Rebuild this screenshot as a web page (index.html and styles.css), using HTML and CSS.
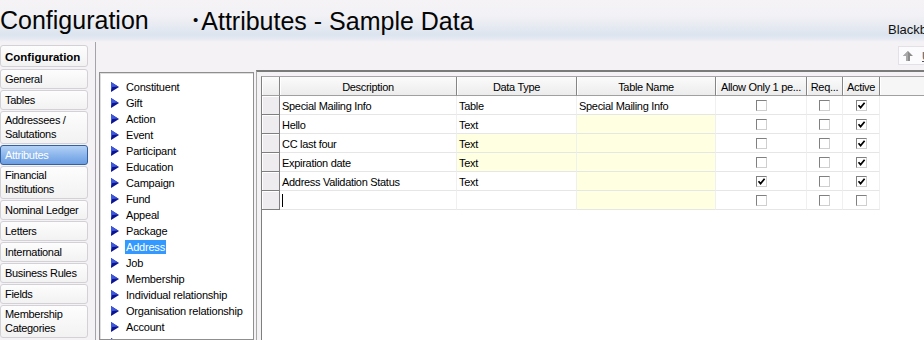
FILE: index.html
```html
<!DOCTYPE html>
<html>
<head>
<meta charset="utf-8">
<link rel="stylesheet" href="styles.css">
</head>
<body>
<header class="topbar">
  <div class="app-title">Configuration</div>
  <div class="page-title"><span class="bullet">•</span>Attributes - Sample Data</div>
  <div class="brand">Blackbaud</div>
</header>
<div class="main">
  <nav class="nav">
    <div class="nav-item nav-head">Configuration</div>
    <div class="nav-item">General</div>
    <div class="nav-item">Tables</div>
    <div class="nav-item two">Addressees /<br>Salutations</div>
    <div class="nav-item active">Attributes</div>
    <div class="nav-item two">Financial<br>Institutions</div>
    <div class="nav-item">Nominal Ledger</div>
    <div class="nav-item">Letters</div>
    <div class="nav-item">International</div>
    <div class="nav-item">Business Rules</div>
    <div class="nav-item">Fields</div>
    <div class="nav-item two">Membership<br>Categories</div>
  </nav>
  <section class="content">
    <div class="toolbar">
      <div class="up-btn">
        <svg width="10" height="10" viewBox="0 0 10 10"><polygon points="5,0 10,5 7,5 7,10 3,10 3,5 0,5" fill="#8c8c8c"/><polygon points="5,0 5,10 3,10 3,5 0,5" fill="#a8a8a8"/></svg>
        <u>Up</u>
      </div>
    </div>
    <div class="panes">
      <div class="tree">
        <div class="tree-item"><svg class="ti" width="8" height="10" viewBox="0 0 8 10"><polygon points="0,0 8,5 0,10" fill="#0c1490"/><polygon points="0,0 7,4.4 1.2,5 0,9" fill="#3d58de"/></svg><span>Constituent</span></div>
        <div class="tree-item"><svg class="ti" width="8" height="10" viewBox="0 0 8 10"><polygon points="0,0 8,5 0,10" fill="#0c1490"/><polygon points="0,0 7,4.4 1.2,5 0,9" fill="#3d58de"/></svg><span>Gift</span></div>
        <div class="tree-item"><svg class="ti" width="8" height="10" viewBox="0 0 8 10"><polygon points="0,0 8,5 0,10" fill="#0c1490"/><polygon points="0,0 7,4.4 1.2,5 0,9" fill="#3d58de"/></svg><span>Action</span></div>
        <div class="tree-item"><svg class="ti" width="8" height="10" viewBox="0 0 8 10"><polygon points="0,0 8,5 0,10" fill="#0c1490"/><polygon points="0,0 7,4.4 1.2,5 0,9" fill="#3d58de"/></svg><span>Event</span></div>
        <div class="tree-item"><svg class="ti" width="8" height="10" viewBox="0 0 8 10"><polygon points="0,0 8,5 0,10" fill="#0c1490"/><polygon points="0,0 7,4.4 1.2,5 0,9" fill="#3d58de"/></svg><span>Participant</span></div>
        <div class="tree-item"><svg class="ti" width="8" height="10" viewBox="0 0 8 10"><polygon points="0,0 8,5 0,10" fill="#0c1490"/><polygon points="0,0 7,4.4 1.2,5 0,9" fill="#3d58de"/></svg><span>Education</span></div>
        <div class="tree-item"><svg class="ti" width="8" height="10" viewBox="0 0 8 10"><polygon points="0,0 8,5 0,10" fill="#0c1490"/><polygon points="0,0 7,4.4 1.2,5 0,9" fill="#3d58de"/></svg><span>Campaign</span></div>
        <div class="tree-item"><svg class="ti" width="8" height="10" viewBox="0 0 8 10"><polygon points="0,0 8,5 0,10" fill="#0c1490"/><polygon points="0,0 7,4.4 1.2,5 0,9" fill="#3d58de"/></svg><span>Fund</span></div>
        <div class="tree-item"><svg class="ti" width="8" height="10" viewBox="0 0 8 10"><polygon points="0,0 8,5 0,10" fill="#0c1490"/><polygon points="0,0 7,4.4 1.2,5 0,9" fill="#3d58de"/></svg><span>Appeal</span></div>
        <div class="tree-item"><svg class="ti" width="8" height="10" viewBox="0 0 8 10"><polygon points="0,0 8,5 0,10" fill="#0c1490"/><polygon points="0,0 7,4.4 1.2,5 0,9" fill="#3d58de"/></svg><span>Package</span></div>
        <div class="tree-item"><svg class="ti" width="8" height="10" viewBox="0 0 8 10"><polygon points="0,0 8,5 0,10" fill="#0c1490"/><polygon points="0,0 7,4.4 1.2,5 0,9" fill="#3d58de"/></svg><span class="sel">Address</span></div>
        <div class="tree-item"><svg class="ti" width="8" height="10" viewBox="0 0 8 10"><polygon points="0,0 8,5 0,10" fill="#0c1490"/><polygon points="0,0 7,4.4 1.2,5 0,9" fill="#3d58de"/></svg><span>Job</span></div>
        <div class="tree-item"><svg class="ti" width="8" height="10" viewBox="0 0 8 10"><polygon points="0,0 8,5 0,10" fill="#0c1490"/><polygon points="0,0 7,4.4 1.2,5 0,9" fill="#3d58de"/></svg><span>Membership</span></div>
        <div class="tree-item"><svg class="ti" width="8" height="10" viewBox="0 0 8 10"><polygon points="0,0 8,5 0,10" fill="#0c1490"/><polygon points="0,0 7,4.4 1.2,5 0,9" fill="#3d58de"/></svg><span>Individual relationship</span></div>
        <div class="tree-item"><svg class="ti" width="8" height="10" viewBox="0 0 8 10"><polygon points="0,0 8,5 0,10" fill="#0c1490"/><polygon points="0,0 7,4.4 1.2,5 0,9" fill="#3d58de"/></svg><span>Organisation relationship</span></div>
        <div class="tree-item"><svg class="ti" width="8" height="10" viewBox="0 0 8 10"><polygon points="0,0 8,5 0,10" fill="#0c1490"/><polygon points="0,0 7,4.4 1.2,5 0,9" fill="#3d58de"/></svg><span>Account</span></div>
        <div class="tree-item"><svg class="ti" width="8" height="10" viewBox="0 0 8 10"><polygon points="0,0 8,5 0,10" fill="#0c1490"/><polygon points="0,0 7,4.4 1.2,5 0,9" fill="#3d58de"/></svg><span>Proposal</span></div>
      </div>
      <div class="grid-pane">
        <div class="grid">
          <div class="grid-row">
            <div class="hcell"></div>
            <div class="hcell">Description</div>
            <div class="hcell">Data Type</div>
            <div class="hcell">Table Name</div>
            <div class="hcell">Allow Only 1 pe...</div>
            <div class="hcell">Req...</div>
            <div class="hcell">Active</div>
            <div class="hcell filler"></div>
          </div>
          <div class="grid-row">
            <div class="rh"></div>
            <div class="cell">Special Mailing Info</div>
            <div class="cell">Table</div>
            <div class="cell">Special Mailing Info</div>
            <div class="cell chk"><span class="cb"></span></div>
            <div class="cell chk"><span class="cb"></span></div>
            <div class="cell chk"><span class="cb"><svg width="9" height="9" viewBox="0 0 9 9"><path d="M1.5 4.2 L3.6 6.6 L7.6 1.8" stroke="#000" stroke-width="1.7" fill="none"/></svg></span></div>
            <div class="cell filler"></div>
          </div>
          <div class="grid-row">
            <div class="rh"></div>
            <div class="cell">Hello</div>
            <div class="cell">Text</div>
            <div class="cell y"></div>
            <div class="cell chk"><span class="cb"></span></div>
            <div class="cell chk"><span class="cb"></span></div>
            <div class="cell chk"><span class="cb"><svg width="9" height="9" viewBox="0 0 9 9"><path d="M1.5 4.2 L3.6 6.6 L7.6 1.8" stroke="#000" stroke-width="1.7" fill="none"/></svg></span></div>
            <div class="cell filler"></div>
          </div>
          <div class="grid-row">
            <div class="rh"></div>
            <div class="cell">CC last four</div>
            <div class="cell y">Text</div>
            <div class="cell y"></div>
            <div class="cell chk"><span class="cb"></span></div>
            <div class="cell chk"><span class="cb"></span></div>
            <div class="cell chk"><span class="cb"><svg width="9" height="9" viewBox="0 0 9 9"><path d="M1.5 4.2 L3.6 6.6 L7.6 1.8" stroke="#000" stroke-width="1.7" fill="none"/></svg></span></div>
            <div class="cell filler"></div>
          </div>
          <div class="grid-row">
            <div class="rh"></div>
            <div class="cell">Expiration date</div>
            <div class="cell y">Text</div>
            <div class="cell y"></div>
            <div class="cell chk"><span class="cb"></span></div>
            <div class="cell chk"><span class="cb"></span></div>
            <div class="cell chk"><span class="cb"><svg width="9" height="9" viewBox="0 0 9 9"><path d="M1.5 4.2 L3.6 6.6 L7.6 1.8" stroke="#000" stroke-width="1.7" fill="none"/></svg></span></div>
            <div class="cell filler"></div>
          </div>
          <div class="grid-row">
            <div class="rh"></div>
            <div class="cell">Address Validation Status</div>
            <div class="cell">Text</div>
            <div class="cell y"></div>
            <div class="cell chk"><span class="cb"><svg width="9" height="9" viewBox="0 0 9 9"><path d="M1.5 4.2 L3.6 6.6 L7.6 1.8" stroke="#000" stroke-width="1.7" fill="none"/></svg></span></div>
            <div class="cell chk"><span class="cb"></span></div>
            <div class="cell chk"><span class="cb"><svg width="9" height="9" viewBox="0 0 9 9"><path d="M1.5 4.2 L3.6 6.6 L7.6 1.8" stroke="#000" stroke-width="1.7" fill="none"/></svg></span></div>
            <div class="cell filler"></div>
          </div>
          <div class="grid-row">
            <div class="rh"></div>
            <div class="cell"><span class="caret"></span></div>
            <div class="cell"></div>
            <div class="cell y"></div>
            <div class="cell chk"><span class="cb"></span></div>
            <div class="cell chk"><span class="cb"></span></div>
            <div class="cell chk"><span class="cb"></span></div>
            <div class="cell filler"></div>
          </div>
        </div>
      </div>
    </div>
  </section>
</div>
</body>
</html>
```

FILE: styles.css
```css
* { box-sizing: border-box; }
html, body { margin: 0; padding: 0; }
body {
  width: 924px;
  height: 340px;
  overflow: hidden;
  background: #f4f2f5;
  font-family: "Liberation Sans", Arial, sans-serif;
  font-size: 11px;
  color: #000;
}

.topbar {
  display: grid;
  grid-template-columns: 193px 695px 1fr;
  height: 42px;
  background: linear-gradient(to bottom, #f5f3f6 0px, #f2f1f5 16px, #e4e9f1 28px, #dce4ef 35px, #e6eaf2 39px, #f4f2f5 42px);
  overflow: hidden;
}
.app-title, .page-title {
  font-size: 25px;
  line-height: 28px;
  padding-top: 6px;
  white-space: nowrap;
  color: #050505;
}
.bullet {
  font-size: 15px;
  vertical-align: 5px;
  margin-right: 3px;
}
.brand {
  font-size: 13px;
  line-height: 14px;
  padding-top: 23px;
  white-space: nowrap;
  overflow: hidden;
  color: #111;
}

.main {
  display: flex;
  height: 298px;
}
.nav {
  flex: none;
  width: 95px;
  padding-top: 3px;
}
.nav-item {
  width: 88px;
  margin-bottom: 1px;
  border: 1px solid #d3d1d6;
  border-radius: 3px;
  background: linear-gradient(to bottom, #fdfdfd, #f2f2f3);
  padding: 2px 4px;
  line-height: 14px;
  letter-spacing: -0.3px;
  white-space: nowrap;
  color: #000;
}
.nav-head {
  font-weight: bold;
  height: 22px;
  line-height: 18px;
  margin-bottom: 2px;
  letter-spacing: 0;
  font-size: 11.5px;
}
.nav-item.two {
  padding: 1px 4px 2px;
}
.nav-item.active {
  background: linear-gradient(to bottom, #b4d2f6, #8cb6ec 50%, #6c9ee2);
  border-color: #33609e;
  color: #fff;
}

.content {
  flex: 1;
  min-width: 0;
  display: flex;
  flex-direction: column;
  border-left: 1px solid #a5a3a8;
}
.toolbar {
  flex: none;
  height: 28px;
  padding: 4px 0 0 802px;
  overflow: hidden;
}
.up-btn {
  display: flex;
  align-items: center;
  gap: 9px;
  width: 40px;
  height: 19px;
  padding-left: 4px;
  border: 1px solid #e3e1e6;
  background: #fbfafc;
  color: #555;
  white-space: nowrap;
}

.panes {
  flex: 1;
  min-height: 0;
  display: flex;
}
.tree {
  flex: none;
  width: 155px;
  margin: 2px 0 0 3px;
  border: 1px solid #8f8f8f;
  box-shadow: inset 1px 1px 0 #dedede;
  background: #fff;
  padding: 6px 0 0 11px;
  overflow: hidden;
}
.tree-item {
  display: flex;
  align-items: center;
  gap: 7px;
  height: 16px;
  letter-spacing: -0.2px;
  white-space: nowrap;
}
.ti { flex: none; }
.sel {
  background: #3399ff;
  color: #fff;
  padding: 0 1px;
  margin-left: -1px;
  line-height: 14px;
}

.grid-pane {
  flex: 1;
  min-width: 0;
  display: flex;
  margin-left: 2px;
  border-top: 2px solid #7a7a7a;
  border-left: 1px solid #a8a8a8;
  padding: 4px 0 0 4px;
}
.grid {
  flex: 1;
  background: #fff;
  border-left: 1px solid #7f7f7f;
  border-top: 1px solid #a6a6a6;
}
.grid-row {
  display: grid;
  grid-template-columns: 18px 177px 120px 139px 91px 36px 37px 1fr;
}
.hcell {
  height: 19px;
  border-right: 1px solid #858585;
  border-bottom: 1px solid #a0a0a0;
  background: linear-gradient(to bottom, #fbfbfb, #ececec);
  box-shadow: inset 1px 0 0 #fff;
  text-align: center;
  line-height: 21px;
  letter-spacing: -0.3px;
  white-space: nowrap;
  overflow: hidden;
}
.hcell.filler {
  border-right: none;
  background: #f6f6f6;
}
.rh {
  height: 19px;
  background: #eeecef;
  border-right: 1px solid #7f7f7f;
  border-bottom: 1px solid #7f7f7f;
  box-shadow: inset 1px 1px 0 #fff;
}
.cell {
  height: 19px;
  border-right: 1px solid #f0f0f0;
  border-bottom: 1px solid #e6e6e6;
  padding-left: 2px;
  line-height: 21px;
  letter-spacing: -0.3px;
  white-space: nowrap;
  overflow: hidden;
}
.cell.y { background: #ffffe1; }
.cell.chk {
  display: flex;
  align-items: center;
  justify-content: center;
  padding-left: 0;
}
.cell.filler {
  border: none;
}
.cb {
  display: flex;
  align-items: center;
  justify-content: center;
  width: 11px;
  height: 11px;
  border: 1px solid;
  border-color: #808080 #cfcfcf #cfcfcf #808080;
  background: #fff;
}
.caret {
  display: inline-block;
  width: 1px;
  height: 13px;
  background: #000;
  vertical-align: -2px;
}
```
